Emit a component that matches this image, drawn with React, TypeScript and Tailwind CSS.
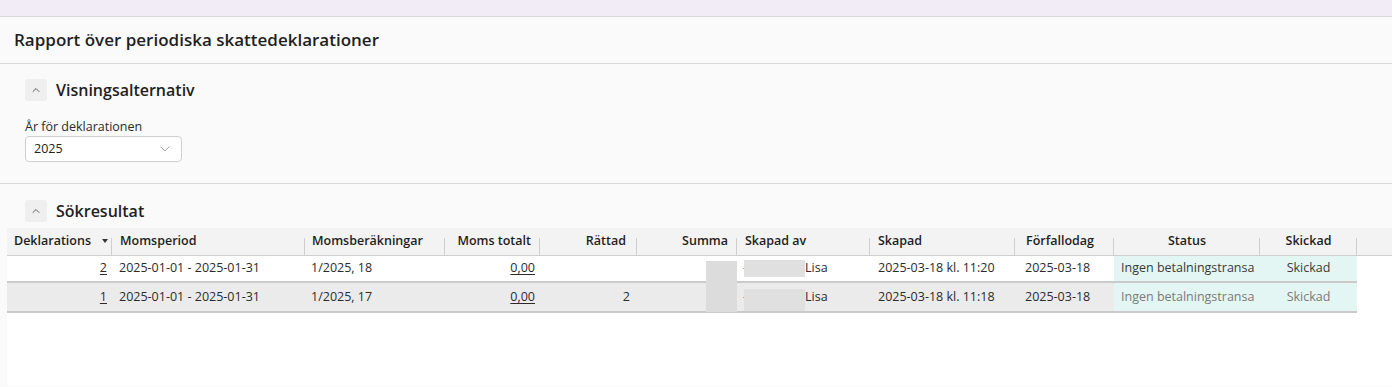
import { ChevronDown, ChevronUp } from "lucide-react";

type Row = {
	nr: string;
	period: string;
	calc: string;
	total: string;
	fixed: string;
	created: string;
	due: string;
	status: string;
	sent: string;
	blockH: string;
	muted: boolean;
};

const ROWS: Row[] = [
	{
		nr: "2",
		period: "2025-01-01 - 2025-01-31",
		calc: "1/2025, 18",
		total: "0,00",
		fixed: "",
		created: "2025-03-18 kl. 11:20",
		due: "2025-03-18",
		status: "Ingen betalningstransa",
		sent: "Skickad",
		blockH: "h-[17px]",
		muted: false
	},
	{
		nr: "1",
		period: "2025-01-01 - 2025-01-31",
		calc: "1/2025, 17",
		total: "0,00",
		fixed: "2",
		created: "2025-03-18 kl. 11:18",
		due: "2025-03-18",
		status: "Ingen betalningstransa",
		sent: "Skickad",
		blockH: "h-[22px] mt-[6px]",
		muted: true
	}
];

const sep =
	"relative after:absolute after:right-0 after:bottom-0 after:h-[17px] after:w-px after:bg-[#cfcfcf]";

function SectionTitle({ title }: { title: string }) {
	return (
		<div className="flex items-center gap-[9px]">
			<button
				className="flex h-[22px] w-[22px] items-center justify-center rounded-[3px] bg-[#efefef] text-[#333]"
				type="button"
			>
				<ChevronUp size={12} strokeWidth={1.6} />
			</button>
			<h2 className="font-semibold text-[16px] text-[#1f1f1f] leading-[22px]">{title}</h2>
		</div>
	);
}

export default function App() {
	return (
		<div
			className="min-h-[387px] w-[1392px] overflow-hidden bg-[#fafafa] text-[#2b2b2b]"
			style={{ fontFamily: '"Open Sans", "Noto Sans", sans-serif' }}
		>
			<div className="h-[17px] border-[#d6d6d6] border-b bg-[#f2ecf7]" />

			<div className="flex h-[47px] items-center border-[#d6d6d6] border-b px-[14px]">
				<h1 className="font-semibold text-[17px] text-[#1f1f1f]">
					Rapport över periodiska skattedeklarationer
				</h1>
			</div>

			<section className="border-[#d6d6d6] border-b px-[25px] pt-[15px] pb-[21px]">
				<SectionTitle title="Visningsalternativ" />
				<label
					className="mt-[18px] block text-[12.5px] text-[#2b2b2b] leading-[16px]"
					htmlFor="year"
				>
					År för deklarationen
				</label>
				<div
					className="mt-[1px] flex h-[26px] w-[157px] items-center justify-between rounded-[4px] border border-[#cfcfcf] bg-white pr-[8px] pl-[8px]"
					id="year"
				>
					<span className="text-[12.5px] text-[#222]">2025</span>
					<ChevronDown className="text-[#8a8a8a]" size={16} strokeWidth={1.2} />
				</div>
			</section>

			<section className="pt-[16px] pl-[25px]">
				<SectionTitle title="Sökresultat" />
			</section>

			<div className="relative mt-[6px] ml-[7px] min-h-[158px] bg-white">
				<table className="w-full table-fixed border-collapse text-[12.5px]">
					<colgroup>
						<col className="w-[105px]" />
						<col className="w-[193px]" />
						<col className="w-[140px]" />
						<col className="w-[95px]" />
						<col className="w-[97px]" />
						<col className="w-[100px]" />
						<col className="w-[133px]" />
						<col className="w-[145px]" />
						<col className="w-[99px]" />
						<col className="w-[146px]" />
						<col className="w-[97px]" />
						<col />
					</colgroup>
					<thead>
						<tr className="h-[27px] border-[#cfcfcf] border-b bg-[#f3f3f3] font-semibold text-[#1f1f1f]">
							<th className={`${sep} pl-[7px] text-left font-semibold`}>
								<span className="flex items-center justify-between pr-[4px]">
									Deklarations
									<span className="h-0 w-0 border-x-[3px] border-x-transparent border-t-[4px] border-t-[#333]" />
								</span>
							</th>
							<th className={`${sep} pl-[8px] text-left font-semibold`}>Momsperiod</th>
							<th className={`${sep} pl-[7px] text-left font-semibold`}>Momsberäkningar</th>
							<th className={`${sep} pr-[9px] text-right font-semibold`}>Moms totalt</th>
							<th className={`${sep} pr-[11px] text-right font-semibold`}>Rättad</th>
							<th className={`${sep} pr-[9px] text-right font-semibold`}>Summa</th>
							<th className={`${sep} pl-[8px] text-left font-semibold`}>Skapad av</th>
							<th className={`${sep} pl-[8px] text-left font-semibold`}>Skapad</th>
							<th className={`${sep} pl-[11px] text-left font-semibold`}>Förfallodag</th>
							<th className={`${sep} text-center font-semibold`}>Status</th>
							<th className={`${sep} text-center font-semibold`}>Skickad</th>
							<th />
						</tr>
					</thead>
					<tbody>
						{ROWS.map((r) => {
							const line = "border-b-2 border-[#cacaca]";
							const bg = r.muted ? "bg-[#ebebeb]" : "bg-white";
							const statusText = r.muted ? "text-[#7a7a7a]" : "text-[#3a3a3a]";
							return (
								<tr className="h-[27px]" key={r.nr}>
									<td className={`${line} ${bg} pr-[5px] text-right`}>
										<span className="underline underline-offset-2">{r.nr}</span>
									</td>
									<td className={`${line} ${bg} pl-[7px]`}>{r.period}</td>
									<td className={`${line} ${bg} pl-[6px]`}>{r.calc}</td>
									<td className={`${line} ${bg} pr-[5px] text-right`}>
										<span className="underline underline-offset-2">{r.total}</span>
									</td>
									<td className={`${line} ${bg} pr-[7px] text-right`}>{r.fixed}</td>
									<td className={`${line} ${bg}`} />
									<td className={`${line} ${bg} pl-[6px]`}>
										<span className="flex items-center">
											<span className="h-px w-px bg-[#e0a060]" />
											<span className={`${r.blockH} w-[61px] bg-[#e0e0e0]`} />
											<span>Lisa</span>
										</span>
									</td>
									<td className={`${line} ${bg} pl-[8px]`}>{r.created}</td>
									<td className={`${line} ${bg} pl-[10px]`}>{r.due}</td>
									<td className={`${line} whitespace-nowrap bg-[#e3f6f3] pl-[7px] ${statusText}`}>
										{r.status}
									</td>
									<td className={`${line} bg-[#e3f6f3] text-center ${statusText}`}>{r.sent}</td>
									<td className="bg-white" />
								</tr>
							);
						})}
					</tbody>
				</table>
				{/* redacted amount column, drawn over both rows */}
				<div className="absolute top-[33px] left-[699px] h-[51px] w-[31px] bg-[#dcdcdc]" />
			</div>
		</div>
	);
}
